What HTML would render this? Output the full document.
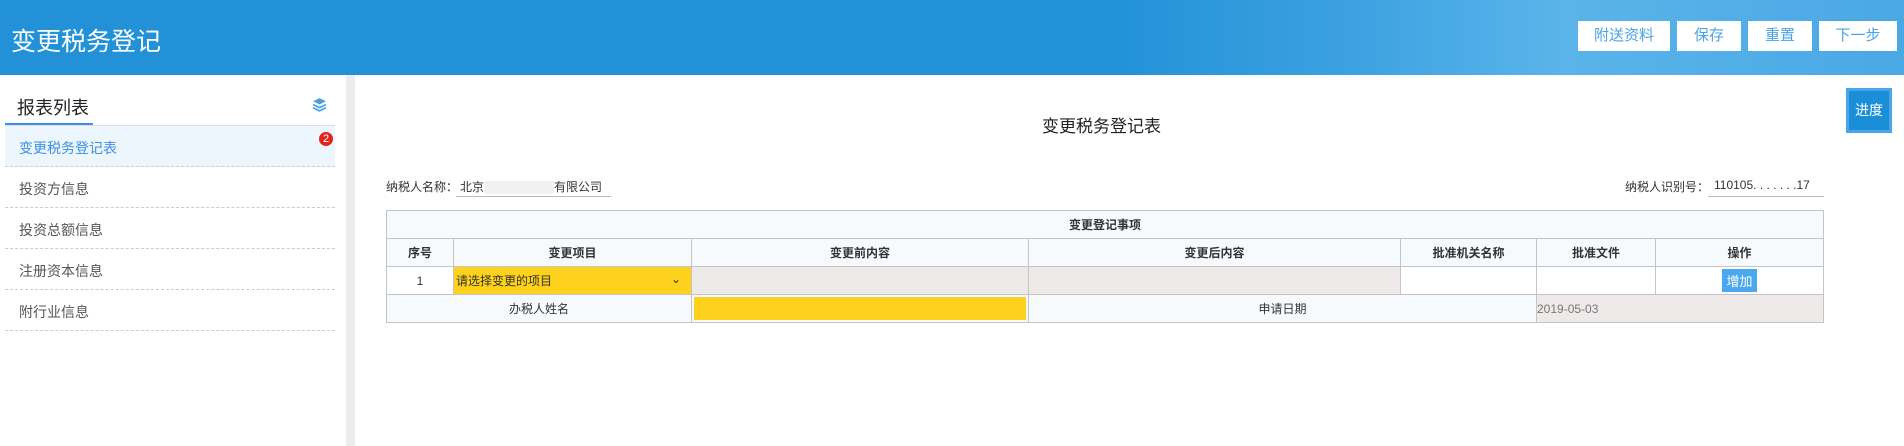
<!DOCTYPE html>
<html><head><meta charset="utf-8"><style>
*{margin:0;padding:0;box-sizing:border-box}
body{width:1904px;height:446px;position:relative;background:#fff;font-family:"Liberation Sans","Noto Sans CJK SC",sans-serif;overflow:hidden;color:#333}
.hdr{position:absolute;left:0;top:0;width:1904px;height:75px;background:linear-gradient(90deg,#2291d8 0%,#2291d8 58%,#3aa0e0 70%,#5ab4ea 82%,#4aa8e4 100%)}
.hdr h1{position:absolute;left:11px;top:22px;font-size:25px;color:#fff;font-weight:normal}
.btn{position:absolute;top:21px;height:30px;background:#fff;color:#4aa3e6;font-size:15px;text-align:center;line-height:30px}
.div{position:absolute;left:346px;top:75px;width:9px;height:371px;background:#ececec}
.st{position:absolute;left:17px;top:94px;font-size:18px;color:#222}
.ul{position:absolute;left:5px;top:123px;width:88px;height:2px;background:#3f8ee8}
.bl{position:absolute;left:5px;top:125px;width:330px;height:1px;background:#dde}
.it{position:absolute;left:5px;width:330px;height:41px;border-bottom:1px dashed #ccc;font-size:14px;color:#555;padding:12px 0 0 14px}
.badge{position:absolute;left:319px;top:132px;width:14px;height:14px;border-radius:7px;background:#e0251d;color:#fff;font-size:11px;text-align:center;line-height:14px}
.t{position:absolute;font-size:12px;white-space:nowrap}
table{position:absolute;left:386px;top:210px;width:1438px;border-collapse:collapse;font-size:12px;table-layout:fixed}
td{border:1px solid #c5c5c5;height:28px;text-align:center;background:#f6fafc;white-space:nowrap;overflow:hidden}
.h td{font-weight:bold}
</style></head><body>
<div class="hdr"><h1>变更税务登记</h1>
<div class="btn" style="left:1578px;width:92px">附送资料</div>
<div class="btn" style="left:1677px;width:64px">保存</div>
<div class="btn" style="left:1748px;width:64px">重置</div>
<div class="btn" style="left:1819px;width:78px">下一步</div>
</div>
<div class="st">报表列表</div>
<svg style="position:absolute;left:312px;top:97px" width="15" height="16" viewBox="0 0 14 15"><path d="M7 1L13 4L7 7L1 4Z" fill="#4a9fe6"/><path d="M1 7L7 10L13 7M1 10L7 13L13 10" stroke="#4a9fe6" stroke-width="1.6" fill="none"/></svg>
<div class="ul"></div><div class="bl"></div>
<div class="it" style="top:126px;background:#eef6fd;color:#3d8fe0">变更税务登记表</div>
<div class="badge">2</div>
<div class="it" style="top:167px">投资方信息</div>
<div class="it" style="top:208px">投资总额信息</div>
<div class="it" style="top:249px">注册资本信息</div>
<div class="it" style="top:290px">附行业信息</div>
<div class="div"></div>
<div class="t" style="left:1042px;top:112px;font-size:17px;color:#222">变更税务登记表</div>
<div style="position:absolute;left:1846px;top:88px;width:46px;height:45px;background:#1a8fd8;border:3px solid #4aa6ea;color:#fff;font-size:14px;text-align:center;line-height:39px">进度</div>
<div class="t" style="left:386px;top:178px">纳税人名称：</div>
<div class="t" style="left:456px;top:178px;width:155px;border-bottom:1px solid #bbb;height:19px;padding-left:4px">北京<span style="display:inline-block;width:70px;height:13px;background:#f1f1f1;vertical-align:middle"></span>有限公司</div>
<div class="t" style="left:1625px;top:178px">纳税人识别号：</div>
<div class="t" style="left:1708px;top:178px;width:116px;border-bottom:1px solid #bbb;height:19px;padding-left:6px">110105. . . . . . .17</div>
<table>
<colgroup><col style="width:67px"><col style="width:238px"><col style="width:337px"><col style="width:372px"><col style="width:136px"><col style="width:119px"><col></colgroup>
<tr class="h"><td colspan="7">变更登记事项</td></tr>
<tr class="h"><td>序号</td><td>变更项目</td><td>变更前内容</td><td>变更后内容</td><td>批准机关名称</td><td>批准文件</td><td>操作</td></tr>
<tr><td style="background:#fff">1</td><td style="background:#fdd11c;text-align:left;padding-left:2px;position:relative">请选择变更的项目<span style="position:absolute;right:10px;top:5px">⌄</span></td><td style="background:#efeaea"></td><td style="background:#efeaea"></td><td style="background:#fff"></td><td style="background:#fff"></td><td style="background:#fff"><span style="display:inline-block;background:#4aa8ee;color:#fff;font-size:13px;padding:2px 4px">增加</span></td></tr>
<tr><td colspan="2">办税人姓名</td><td style="padding:2px"><div style="background:#fdd11c;height:23px"></div></td><td colspan="2">申请日期</td><td colspan="2" style="background:#efeaea;text-align:left;color:#777">2019-05-03</td></tr>
</table>
</body></html>
